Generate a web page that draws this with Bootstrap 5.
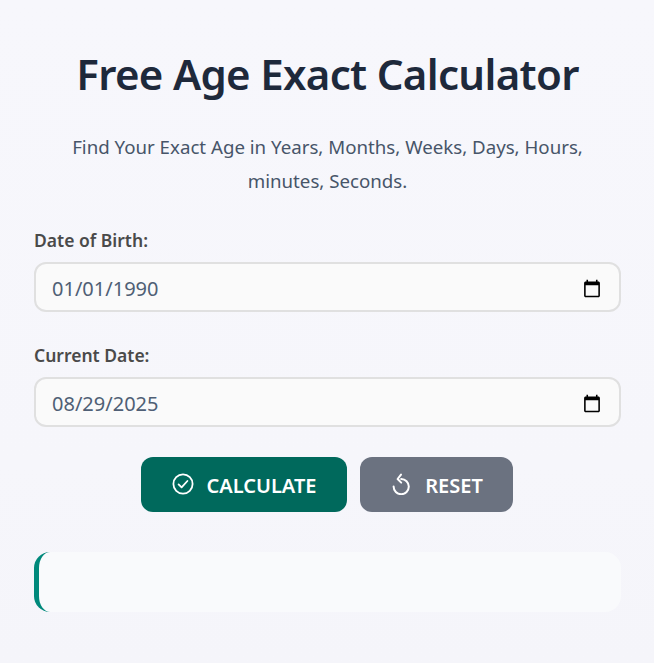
<!DOCTYPE html>
<html lang="en">
<head>
<meta charset="utf-8">
<title>Free Age Exact Calculator</title>
<link href="https://cdn.jsdelivr.net/npm/bootstrap@5.3.0/dist/css/bootstrap.min.css" rel="stylesheet">
<style>
body { background: linear-gradient(180deg, #f7f7fc 0%, #f6f6fb 70%, #f5f5fa 100%); min-height: 100vh; font-family: "Noto Sans", "Open Sans", sans-serif; overflow: hidden; }
.calc-wrap { padding: 46px 33px 0 34px; }
.calc-title { font-size: 42px; letter-spacing: -.68px; font-weight: 600; line-height: 56px; color: #1e293b; margin-bottom: 28px; }
.calc-sub { font-size: 18.7px; line-height: 34px; color: #475569; margin: 0 auto 30px; max-width: 540px; }
.calc-label { font-size: 17.5px; font-weight: 600; color: #4a4a4a; line-height: 24px; margin-bottom: 10px; display: block; }
.calc-field { margin-bottom: 31px; }
.calc-field + .calc-field { margin-bottom: 30px; }
.calc-input.form-control { height: 50px; border: 2px solid #e0e0e0; border-radius: 12px; background-color: #fafafa; color: #4f5f75; font-size: 20px; padding: 3px 15px 0 16px; font-family: inherit; }
.calc-btn { height: 55px; border: 0; border-radius: 12px; color: #fff; font-size: 20px; font-weight: 600; text-transform: uppercase; display: flex; align-items: center; justify-content: center; gap: 13px; padding: 3px 0 0; }
.calc-btn svg { flex: none; margin-top: -4px; }
.calc-row { gap: 13px; padding-right: 1px; }
.btn-go { background: #00695c; width: 206px; }
.btn-clear { background: #6b7280; width: 153px; }
.calc-result { height: 60px; margin-top: 40px; border-left: 5px solid #00897b; border-radius: 16px; background: #f9fafc; }
</style>
</head>
<body>
<div class="calc-wrap">
  <h1 class="calc-title text-center">Free Age Exact Calculator</h1>
  <p class="calc-sub text-center">Find Your Exact Age in Years, Months, Weeks, Days, Hours, minutes, Seconds.</p>
  <form>
    <div class="calc-field">
      <label class="calc-label" for="dob">Date of Birth:</label>
      <input class="form-control calc-input" id="dob" type="date" value="1990-01-01">
    </div>
    <div class="calc-field">
      <label class="calc-label" for="cur">Current Date:</label>
      <input class="form-control calc-input" id="cur" type="date" value="2025-08-29">
    </div>
    <div class="d-flex justify-content-center calc-row">
      <button type="button" class="calc-btn btn-go">
        <svg width="22" height="22" viewBox="0 0 22 22" fill="none" stroke="#fff" stroke-width="1.8" stroke-linecap="round" stroke-linejoin="round"><circle cx="11" cy="11" r="9.6"/><path d="M6.6 11.4l3 3 5.8-6.4"/></svg>
        <span>Calculate</span>
      </button>
      <button type="button" class="calc-btn btn-clear">
        <svg width="22" height="22" viewBox="0 0 22 22" fill="none" stroke="#fff" stroke-width="2" stroke-linecap="round" stroke-linejoin="round"><path d="M3.6 13.6A7.6 7.6 0 1 0 11.2 6"/><path d="M11 1.6L7.6 6l3.6 3.6"/></svg>
        <span>Reset</span>
      </button>
    </div>
  </form>
  <div class="calc-result"></div>
</div>
<script src="https://cdn.jsdelivr.net/npm/bootstrap@5.3.0/dist/js/bootstrap.bundle.min.js"></script>
</body>
</html>
